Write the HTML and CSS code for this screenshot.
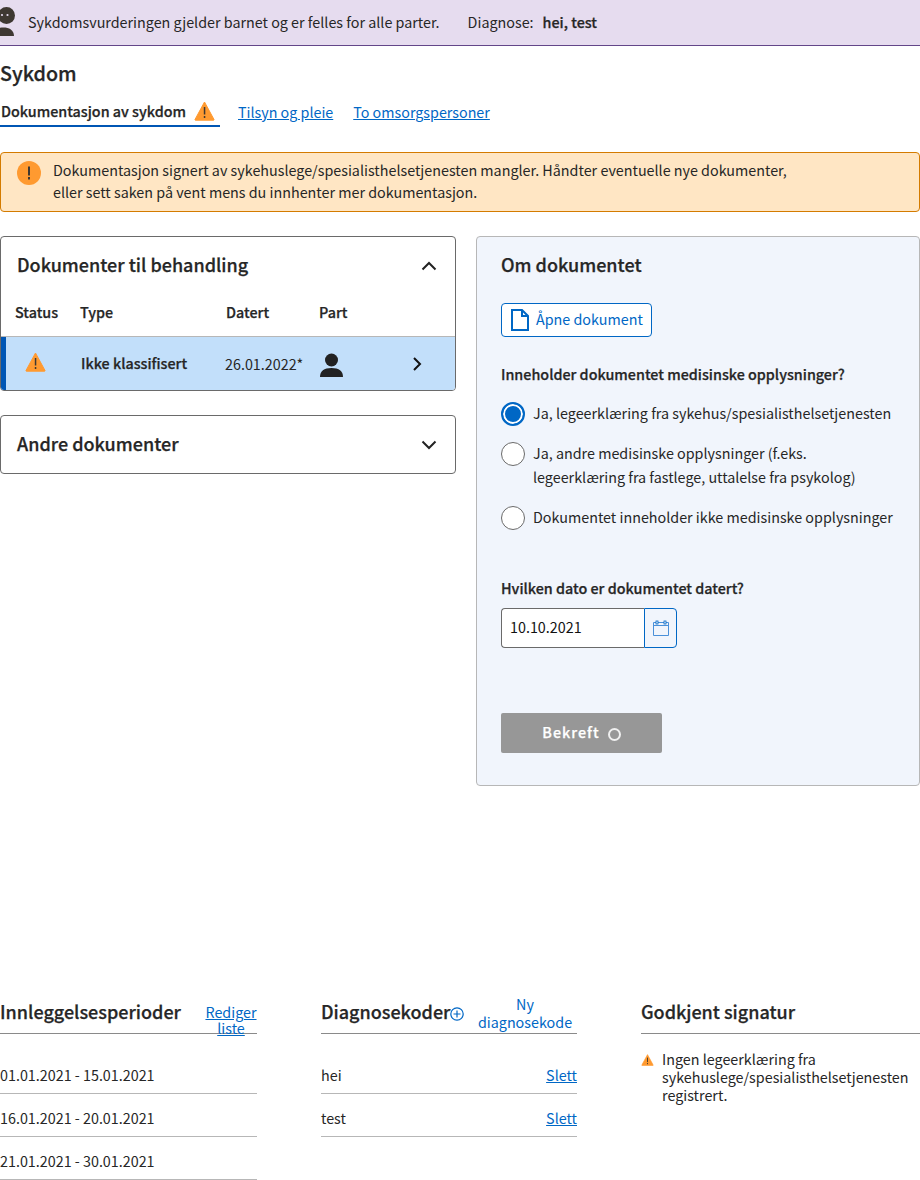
FILE: index.html
```html
<!DOCTYPE html>
<html>
<head>
    <meta charset="utf-8"/>
    <title>Sykdom</title>
    <link rel="stylesheet" href="styles.css">
</head>
<body>
<div class="banner">
    <svg class="banner-icon" width="24" height="46" viewBox="0 0 24 46">
        <circle cx="6.500" cy="16.500" r="8.500" fill="#3e3832"/>
        <circle cx="2" cy="16" r="1.100" fill="#e6dcef"/>
        <circle cx="7.500" cy="16" r="1.100" fill="#e6dcef"/>
        <path d="M-7 37c0-6 5-8.500 10.500-8.500s10.500 2.500 10.500 8.500z" fill="#3e3832"/>
    </svg>
    <span class="banner-text">Sykdomsvurderingen gjelder barnet og er felles for alle parter.</span>
    <span class="banner-diag">Diagnose:</span>
    <b class="banner-code">hei, test</b>
</div>

<h1 class="title">Sykdom</h1>

<div class="tabs">
    <div class="tab tab-active">
        Dokumentasjon av sykdom
        <svg class="warn" width="21" height="20" viewBox="0 0 21 20"><use href="#warn"/></svg>
    </div>
    <a class="tab-link" href="#">Tilsyn og pleie</a>
    <a class="tab-link" href="#">To omsorgspersoner</a>
</div>

<div class="alert">
    <svg width="24" height="24" viewBox="0 0 24 24">
        <circle cx="12" cy="12" r="12" fill="#ff9a30"/>
        <rect x="11" y="5.500" width="2" height="9" fill="#3e3832"/>
        <rect x="11" y="16" width="2" height="2.500" fill="#3e3832"/>
    </svg>
    <div class="alert-text">Dokumentasjon signert av sykehuslege/spesialisthelsetjenesten mangler. Håndter eventuelle nye dokumenter,<br>eller sett saken på vent mens du innhenter mer dokumentasjon.</div>
</div>

<div class="main">
    <div class="left">
        <div class="card">
            <div class="card-head">
                <h2>Dokumenter til behandling</h2>
                <svg width="16" height="10" viewBox="0 0 16 10"><path d="M1.500 8.500 8 2l6.500 6.500" fill="none" stroke="#222" stroke-width="2"/></svg>
            </div>
            <div class="doc-head">
                <span>Status</span>
                <span>Type</span>
                <span>Datert</span>
                <span>Part</span>
            </div>
            <div class="doc-row">
                <svg class="doc-warn" width="21" height="20" viewBox="0 0 21 20"><use href="#warn"/></svg>
                <b>Ikke klassifisert</b>
                <span>26.01.2022*</span>
                <svg width="23" height="24" viewBox="0 0 23 24">
                    <circle cx="11.500" cy="7" r="6.500" fill="#222"/>
                    <path d="M0 24c0-6 4-9 11.500-9s11.500 3 11.500 9z" fill="#222"/>
                </svg>
                <svg class="doc-arrow" width="10" height="14" viewBox="0 0 10 14"><path d="M2 1l6 6-6 6" fill="none" stroke="#111" stroke-width="2"/></svg>
            </div>
        </div>
        <div class="card card-closed">
            <div class="card-head">
                <h2>Andre dokumenter</h2>
                <svg width="16" height="10" viewBox="0 0 16 10"><path d="M1.500 1.500 8 8l6.500-6.500" fill="none" stroke="#222" stroke-width="2"/></svg>
            </div>
        </div>
    </div>

    <div class="panel">
        <h2>Om dokumentet</h2>
        <a class="open-btn" href="#">
            <svg width="18" height="22" viewBox="0 0 18 22"><path d="M1 1h10l6 6v14H1zM11 1v6h6" fill="none" stroke="#0067c5" stroke-width="2"/></svg>
            Åpne dokument
        </a>
        <div class="question">Inneholder dokumentet medisinske opplysninger?</div>
        <div class="radio-row">
            <span class="radio radio-on"></span>
            <span class="radio-text">Ja, legeerklæring fra sykehus/spesialisthelsetjenesten</span>
        </div>
        <div class="radio-row">
            <span class="radio"></span>
            <span class="radio-text">Ja, andre medisinske opplysninger (f.eks.<br>legeerklæring fra fastlege, uttalelse fra psykolog)</span>
        </div>
        <div class="radio-row radio-last">
            <span class="radio"></span>
            <span class="radio-text">Dokumentet inneholder ikke medisinske opplysninger</span>
        </div>
        <div class="question date-label">Hvilken dato er dokumentet datert?</div>
        <div class="date">
            <div class="date-value">10.10.2021</div>
            <div class="date-btn">
                <svg width="16" height="16" viewBox="0 0 16 16">
                    <path d="M.5 2.500h15v13H.5z" fill="none" stroke="#4a90d9"/>
                    <path d="M.5 5.500h15" stroke="#4a90d9"/>
                    <rect x="3" y="1" width="2" height="3" fill="#f1f5fc" stroke="#0067c5" stroke-width=".8"/>
                    <rect x="11" y="1" width="2" height="3" fill="#f1f5fc" stroke="#0067c5" stroke-width=".8"/>
                </svg>
            </div>
        </div>
        <div class="confirm">Bekreft <span class="spinner"></span></div>
    </div>
</div>

<div class="bottom">
    <div class="col col-periods">
        <div class="col-head">
            <h3>Innleggelsesperioder</h3>
            <a class="head-link" href="#">Rediger liste</a>
        </div>
        <div class="rows">
            <div class="row">01.01.2021 - 15.01.2021</div>
            <div class="row">16.01.2021 - 20.01.2021</div>
            <div class="row">21.01.2021 - 30.01.2021</div>
        </div>
    </div>
    <div class="col col-codes">
        <div class="col-head">
            <h3>Diagnosekoder</h3>
            <svg class="plus" width="14" height="14" viewBox="0 0 14 14">
                <circle cx="7" cy="7" r="6.200" fill="none" stroke="#0067c5" stroke-width="1.200"/>
                <path d="M7 3.500v7M3.500 7h7" stroke="#0067c5" stroke-width="1.200"/>
            </svg>
            <span class="new-code">Ny diagnosekode</span>
        </div>
        <div class="rows">
            <div class="row">hei <a href="#">Slett</a></div>
            <div class="row">test <a href="#">Slett</a></div>
        </div>
    </div>
    <div class="col col-sign">
        <div class="col-head">
            <h3>Godkjent signatur</h3>
        </div>
        <div class="sign">
            <svg width="13" height="12" viewBox="0 0 21 20"><use href="#warn"/></svg>
            <div>Ingen legeerklæring fra sykehuslege/spesialisthelsetjenesten registrert.</div>
        </div>
    </div>
</div>

<svg class="defs" width="0" height="0">
    <symbol id="warn" viewBox="0 0 21 20">
        <path d="M10.500 1 20 18.500a.5.5 0 0 1-.4.700H1.400a.5.500 0 0 1-.4-.700z" fill="#ff9a30" stroke="#ff9a30" stroke-linejoin="round"/>
        <rect x="9.800" y="6" width="1.500" height="7.500" fill="#3e3832"/>
        <rect x="9.800" y="15" width="1.500" height="2" fill="#3e3832"/>
    </symbol>
</svg>
</body>
</html>
```

FILE: styles.css
```css
* {
    box-sizing: border-box;
}
body {
    margin: 0;
    background: #fff;
    color: #262626;
    font-family: "Noto Sans CJK SC", "Noto Sans", sans-serif;
    font-size: 14.33px;
    line-height: 22px;
}
a {
    color: #0067c5;
}
/* medium is the nearest weight, the stroke brings it up to semibold */
b, h1, h2, h3, .tab, .doc-head, .question, .confirm {
    font-weight: 500;
    -webkit-text-stroke: .25px;
}
h1, h2, h3 {
    margin: 0;
}
.defs {
    position: absolute;
}

.banner {
    display: flex;
    align-items: center;
    height: 46px;
    padding-bottom: 2px;
    background: #e6dcef;
    border-bottom: 1px solid #634689;
    overflow: hidden;
}
.banner-icon {
    flex: none;
    margin-top: 1px;
    margin-right: 4px;
}
.banner-text {
    margin-right: 28px;
}
.banner-diag {
    margin-right: 9px;
}

.title {
    margin-top: 14px;
    font-size: 19.7px;
    line-height: 26px;
}

.tabs {
    display: flex;
    align-items: flex-start;
    margin-top: 13px;
}
.tab {
    display: flex;
    align-items: center;
    width: 220px;
    height: 28px;
    padding: 0 0 2px 1px;
    border-bottom: 2px solid #0056b4;
    line-height: 24px;
    white-space: nowrap;
}
.tab .warn {
    margin-left: 8px;
    margin-top: -1px;
}
.tab-link {
    margin-left: 18px;
    margin-top: 1px;
    font-size: 14.3px;
    line-height: 24px;
}
.tab-link + .tab-link {
    margin-left: 20px;
}

.alert {
    display: flex;
    height: 60px;
    margin-top: 25px;
    padding: 7px 16px;
    background: #ffe6c4;
    border: 1px solid #d47b00;
    border-radius: 4px;
}
.alert svg {
    flex: none;
    margin-top: 1px;
}
.alert-text {
    margin-top: -1px;
    margin-left: 12px;
}

.main {
    display: flex;
    gap: 20px;
    margin-top: 24px;
}
.left {
    width: 456px;
}
.card {
    border: 1px solid #6a6a6a;
    border-radius: 4px;
    overflow: hidden;
}
.card-closed {
    margin-top: 24px;
}
.card-head {
    display: flex;
    align-items: center;
    justify-content: space-between;
    height: 57px;
    padding: 0 18px 4px 16px;
}
.card-head svg {
    margin-top: 4px;
}
.card-head h2, .panel h2 {
    font-size: 18px;
    line-height: 26px;
}
.doc-head {
    display: grid;
    grid-template-columns: 65px 146px 93px 1fr;
    height: 43px;
    padding: 7px 0 0 14px;
    border-bottom: 1px solid #b7b7b7;
}
.doc-row {
    display: grid;
    grid-template-columns: 56px 144px 95px 92px 1fr;
    align-items: center;
    height: 53px;
    padding-left: 19px;
    background: #c2dffa;
    border-left: 5px solid #0056b4;
}
.doc-row b {
    margin-top: -2px;
}
.doc-warn {
    margin-top: -3px;
}
.doc-row svg:nth-of-type(2) {
    margin-top: 3px;
}

.panel {
    width: 444px;
    height: 550px;
    padding: 14px 24px;
    background: #f1f5fc;
    border: 1px solid #b7b7b7;
    border-radius: 4px;
}
.open-btn {
    display: flex;
    align-items: center;
    gap: 7px;
    width: 151px;
    height: 34px;
    margin-top: 26px;
    padding: 0 0 2px 9px;
    background: #fff;
    border: 1px solid #0067c5;
    border-radius: 4px;
    text-decoration: none;
}
.open-btn svg {
    margin-top: 2px;
}
.question {
    margin-top: 26px;
}
.radio-row {
    display: flex;
    gap: 8px;
    margin-top: 16px;
    line-height: 24px;
}
.question + .radio-row {
    margin-top: 17px;
}
.radio-last {
    margin-top: 17px;
}
.radio-text {
    margin-top: -1px;
}
.radio {
    flex: none;
    width: 24px;
    height: 24px;
    background: #fff;
    border: 1px solid #6a6a6a;
    border-radius: 50%;
}
.radio-on {
    background: #0067c5;
    border: 2px solid #0067c5;
    box-shadow: inset 0 0 0 2px #fff;
}
.date-label {
    margin-top: 47px;
}
.date {
    display: flex;
    width: 176px;
    height: 40px;
    margin-top: 9px;
}
.date-value {
    width: 143px;
    padding: 7px 8px;
    color: #111;
    background: #fff;
    border: 1px solid #6a6a6a;
    border-right: 0;
    border-radius: 4px 0 0 4px;
}
.date-btn {
    display: flex;
    align-items: center;
    justify-content: center;
    width: 33px;
    border: 1px solid #0067c5;
    border-radius: 0 4px 4px 0;
}
.confirm {
    display: flex;
    align-items: center;
    justify-content: center;
    gap: 8px;
    width: 161px;
    height: 40px;
    margin-top: 65px;
    padding-bottom: 2px;
    color: #fff;
    background: #979797;
    border-radius: 2px;
    letter-spacing: 1px;
}
.spinner {
    width: 13px;
    height: 13px;
    margin-top: 4px;
    border: 2px solid #fff;
    border-radius: 50%;
    opacity: .85;
}

.bottom {
    display: flex;
    margin-top: 214px;
}
.col-periods {
    width: 257px;
    margin-right: 64px;
}
.col-codes {
    width: 256px;
    margin-right: 64px;
}
.col-sign {
    flex: 1;
}
.col-head {
    display: flex;
    align-items: center;
    height: 34px;
    border-bottom: 1px solid #8a8a8a;
}
.col-head h3 {
    font-size: 18px;
    line-height: 26px;
    margin-top: -11px;
}
.head-link {
    width: 52px;
    margin-left: auto;
    line-height: 16px;
    text-align: center;
    height: 32px;
    margin-top: 6px;
    flex: none;
}
.plus {
    flex: none;
    margin-top: -6px;
}
.new-code {
    width: 104px;
    margin-left: auto;
    margin-top: -8px;
    color: #0067c5;
    line-height: 18px;
    text-align: center;
}
.rows {
    margin-top: 17px;
}
.row {
    display: flex;
    justify-content: space-between;
    height: 43px;
    padding-top: 13px;
    border-bottom: 1px solid #b7b7b7;
}
.sign {
    display: flex;
    gap: 8px;
    margin-top: 16px;
    line-height: 18px;
}
.sign svg {
    flex: none;
    margin-top: 4px;
}
```
